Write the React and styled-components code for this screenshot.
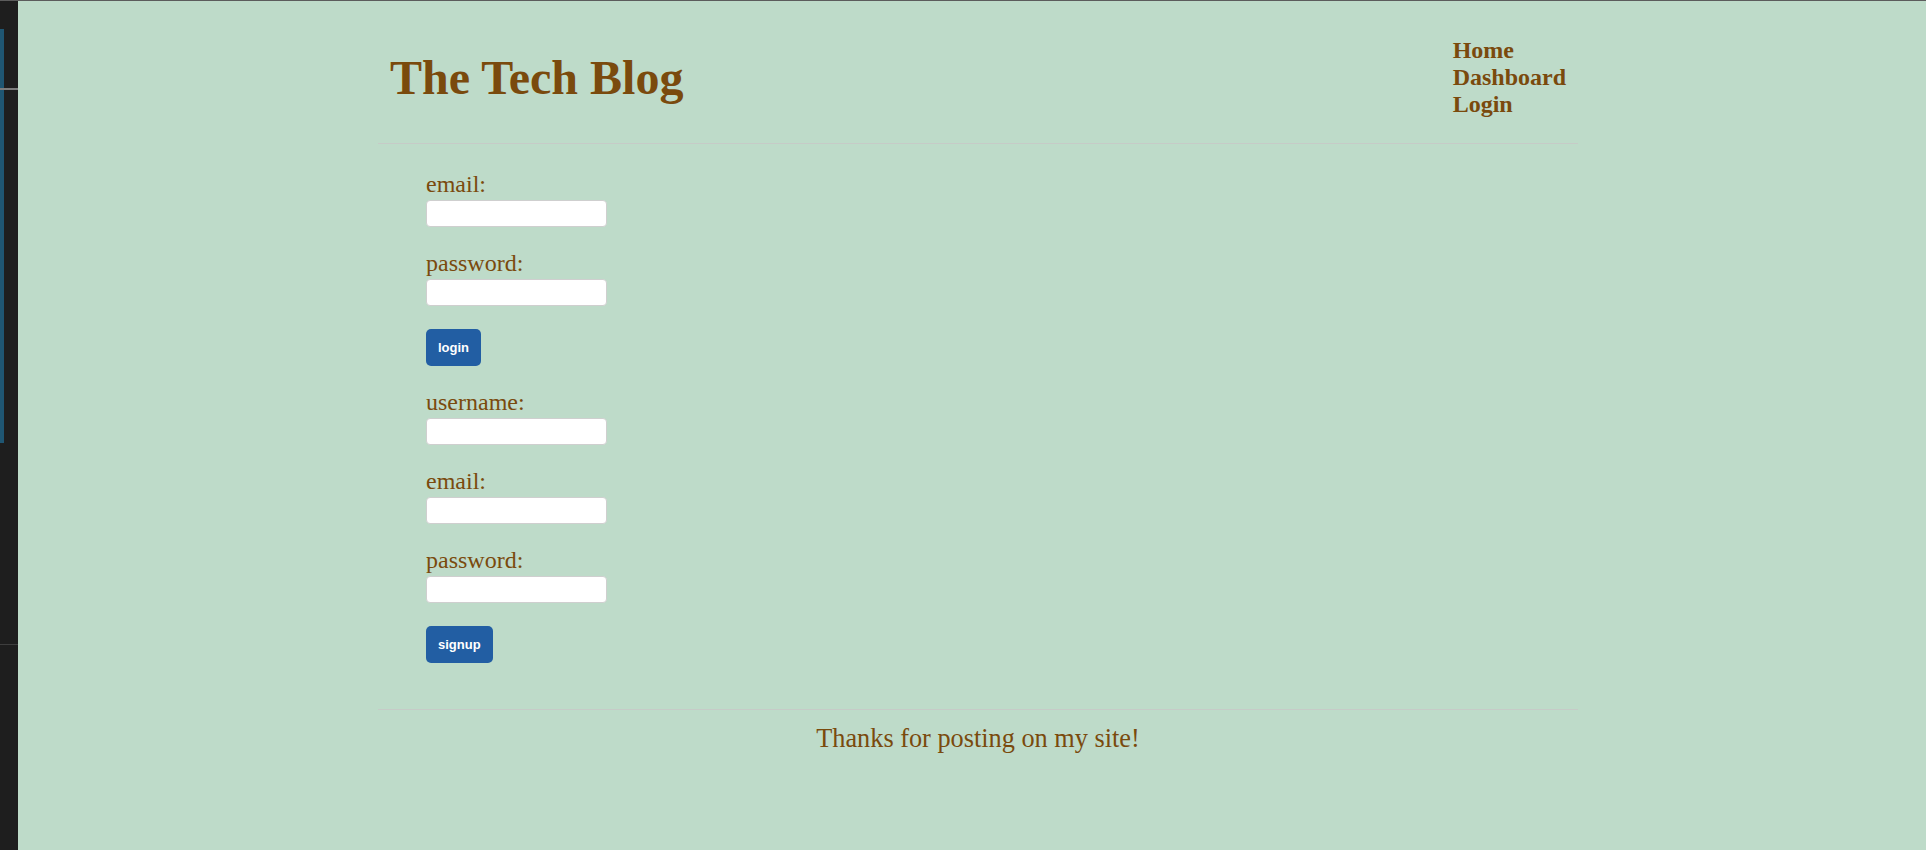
import React from 'react';
import styled, { createGlobalStyle } from 'styled-components';

const GlobalStyle = createGlobalStyle`
  html, body {
    margin: 0;
    padding: 0;
    background-color: #1e1e1e;
  }
`;

export default function App() {
  return (
    <>
      <GlobalStyle />
      <Frame>
        <Sidebar>
          <SideSpacer h={28} />
          <SideTrack h={59} />
          <SideRule />
          <SideTrack h={353} />
          <SideSpacer h={201} />
          <SideLine />
        </Sidebar>
        <Page>
          <Container>
            <Header>
              <Title>The Tech Blog</Title>
              <Nav>
                <NavLink href="#">Home</NavLink>
                <NavLink href="#">Dashboard</NavLink>
                <NavLink href="#">Login</NavLink>
              </Nav>
            </Header>
            <Content>
              <Form>
                <Group>
                  <Label htmlFor="login-email">email:</Label>
                  <Input id="login-email" type="text" />
                </Group>
                <Group>
                  <Label htmlFor="login-password">password:</Label>
                  <Input id="login-password" type="password" />
                </Group>
                <Button type="button">login</Button>
              </Form>
              <Form>
                <Group>
                  <Label htmlFor="signup-username">username:</Label>
                  <Input id="signup-username" type="text" />
                </Group>
                <Group>
                  <Label htmlFor="signup-email">email:</Label>
                  <Input id="signup-email" type="text" />
                </Group>
                <Group>
                  <Label htmlFor="signup-password">password:</Label>
                  <Input id="signup-password" type="password" />
                </Group>
                <Button type="button">signup</Button>
              </Form>
            </Content>
            <Footer>Thanks for posting on my site!</Footer>
          </Container>
        </Page>
      </Frame>
    </>
  );
}

const Frame = styled.div`
  display: flex;
  height: 850px;
  box-sizing: border-box;
  border-top: 1px solid #5c5c5c;
  overflow: hidden;
`;

const Sidebar = styled.div`
  width: 18px;
  flex-shrink: 0;
  background-color: #1e1e1e;
  display: flex;
  flex-direction: column;
`;

const SideSpacer = styled.div`
  height: ${(props) => props.h}px;
  flex-shrink: 0;
`;

const SideTrack = styled.div`
  height: ${(props) => props.h}px;
  flex-shrink: 0;
  width: 4px;
  background-color: #1f5672;
`;

const SideRule = styled.div`
  height: 2px;
  flex-shrink: 0;
  background-color: #7d7d7d;
`;

const SideLine = styled.div`
  height: 1px;
  flex-shrink: 0;
  background-color: #3e3e3e;
`;

const Page = styled.main`
  flex: 1;
  background-color: #bedbc9;
  padding-left: 12px;
  color: #7a4a0d;
  font-family: "Liberation Serif", "Times New Roman", serif;
`;

const Container = styled.div`
  max-width: 1200px;
  margin: 0 auto;
`;

const Header = styled.header`
  display: flex;
  justify-content: space-between;
  align-items: center;
  padding: 36px 12px 25px;
  border-bottom: 1px solid #c6cbc7;
`;

const Title = styled.h1`
  margin: 0;
  font-size: 48px;
  font-weight: bold;
  line-height: normal;
`;

const Nav = styled.nav`
  display: flex;
  flex-direction: column;
`;

const NavLink = styled.a`
  font-size: 24px;
  font-weight: bold;
  line-height: normal;
  color: #7a4a0d;
  text-decoration: none;
`;

const Content = styled.section`
  padding: 26.5px 48px 46px;
`;

const Form = styled.form`
  margin-bottom: 23px;

  &:last-child {
    margin-bottom: 0;
  }
`;

const Group = styled.div`
  margin-bottom: 23px;
`;

const Label = styled.label`
  display: block;
  font-size: 24px;
  line-height: normal;
`;

const Input = styled.input`
  display: block;
  box-sizing: border-box;
  width: 181px;
  height: 27px;
  margin-top: 2px;
  padding: 2px 6px;
  border: 1px solid #cfcfcf;
  border-radius: 4px;
  background-color: #fff;
  font-family: "Liberation Sans", Arial, sans-serif;
  font-size: 13px;
`;

const Button = styled.button`
  display: block;
  height: 37px;
  margin-top: 3px;
  padding: 0 12px;
  border: none;
  border-radius: 5px;
  background-color: #225ea3;
  color: #fff;
  font-family: "Liberation Sans", Arial, sans-serif;
  font-size: 13px;
  font-weight: bold;
  cursor: pointer;
`;

const Footer = styled.footer`
  border-top: 1px solid #c6cbc7;
  padding-top: 14px;
  text-align: center;
  font-size: 26.3px;
  line-height: normal;
`;
